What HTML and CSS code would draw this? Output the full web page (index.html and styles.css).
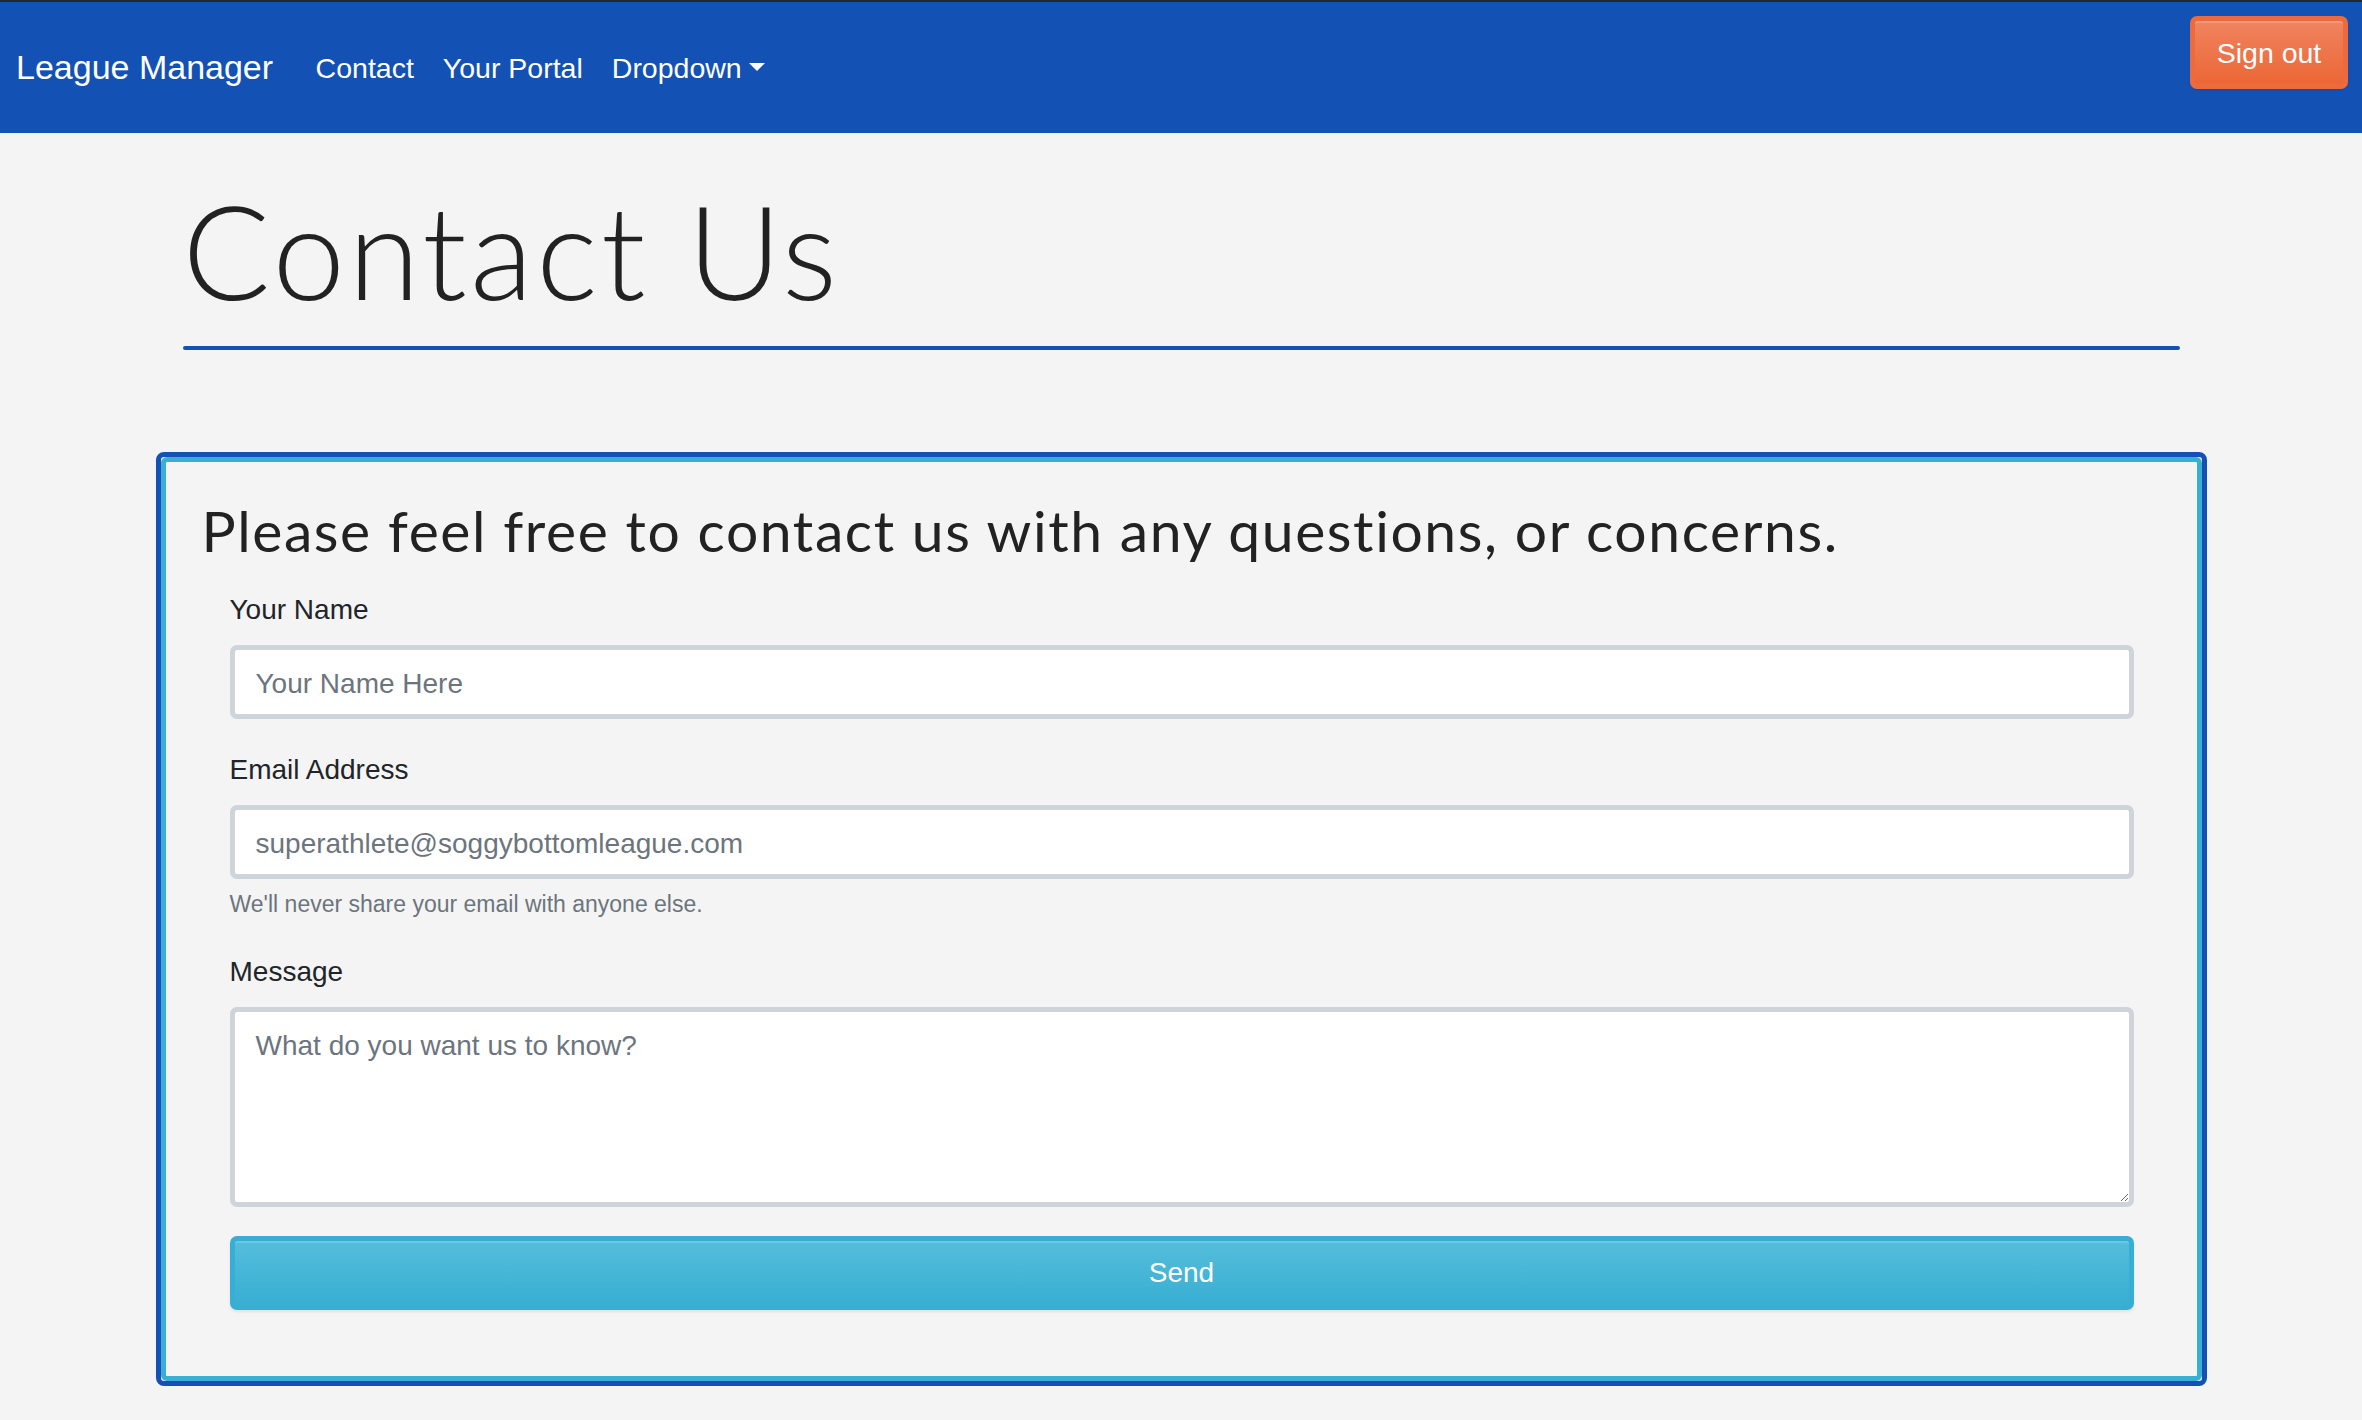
FILE: index.html
```html
<!DOCTYPE html>
<html lang="en">
<head>
<meta charset="utf-8">
<title>Contact Us - League Manager</title>
<link rel="stylesheet" href="styles.css">
</head>
<body>
<nav class="navbar">
  <a class="brand" href="#">League Manager</a>
  <ul class="nav">
    <li><a class="nav-link" href="#">Contact</a></li>
    <li><a class="nav-link" href="#">Your Portal</a></li>
    <li><a class="nav-link dropdown-toggle" href="#">Dropdown</a></li>
  </ul>
  <button class="btn btn-signout" type="button">Sign out</button>
</nav>

<main class="container">
  <h1 class="page-title">Contact Us</h1>
  <hr class="title-rule">
</main>

<section class="card">
  <div class="card-inner">
    <h2 class="card-title">Please feel free to contact us with any questions, or concerns.</h2>
    <form class="contact-form">
      <div class="form-group">
        <label class="form-label" for="name">Your Name</label>
        <input class="form-control" id="name" type="text" placeholder="Your Name Here">
      </div>
      <div class="form-group">
        <label class="form-label" for="email">Email Address</label>
        <input class="form-control form-control-help" id="email" type="email" placeholder="superathlete@soggybottomleague.com">
        <small class="form-text">We'll never share your email with anyone else.</small>
      </div>
      <div class="form-group form-group-last">
        <label class="form-label" for="message">Message</label>
        <textarea class="form-control form-textarea" id="message" placeholder="What do you want us to know?"></textarea>
      </div>
      <button class="btn btn-send" type="submit">Send</button>
    </form>
  </div>
</section>
</body>
</html>
```

FILE: styles.css
```css
* {
  box-sizing: border-box;
}

html, body {
  margin: 0;
  padding: 0;
}

body {
  background: #f4f4f4;
  color: #212529;
  font-family: "Liberation Sans", Arial, sans-serif;
  font-size: 28px;
  line-height: 1.5;
  min-height: 1420px;
}

/* ---------- Navbar ---------- */
.navbar {
  display: flex;
  align-items: center;
  height: 133px;
  border-top: 2px solid #24282c;
  background: #1351b4;
  padding: 0 14px 0 16px;
}

.brand {
  color: #fff;
  text-decoration: none;
  font-size: 34px;
  line-height: 51px;
  margin-right: 28px;
  white-space: nowrap;
}

.nav {
  display: flex;
  list-style: none;
  margin: 0;
  padding: 0;
}

.nav-link {
  display: block;
  color: #fff;
  text-decoration: none;
  font-size: 28.5px;
  line-height: 42px;
  padding: 0 14.5px;
  white-space: nowrap;
}

.dropdown-toggle::after {
  content: "";
  display: inline-block;
  margin-left: 7px;
  vertical-align: 7px;
  border-top: 8px solid #fff;
  border-left: 8px solid transparent;
  border-right: 8px solid transparent;
}

.btn {
  font-family: "Liberation Sans", Arial, sans-serif;
  color: #fff;
  cursor: pointer;
  border-radius: 7px;
}

.btn-signout {
  align-self: flex-start;
  margin: 14px 0 0 auto;
  width: 158px;
  height: 73px;
  font-size: 28.5px;
  line-height: 42px;
  padding: 0;
  border: 5px solid #ec6a3c;
  background: linear-gradient(#f0845f, #ec6636);
  box-shadow: inset 0 2px 0 rgba(255, 255, 255, 0.18), 0 1px 2px rgba(0, 0, 0, 0.08);
}

/* ---------- Page title ---------- */
.container {
  width: 1997px;
  margin: 0 auto;
}

.page-title {
  margin: 39px 0 0;
  font-family: "Lato", "Open Sans", sans-serif;
  font-weight: 300;
  font-size: 130px;
  line-height: 156px;
  letter-spacing: 3.3px;
  color: #222;
  padding-left: 0;
}

.title-rule {
  margin: 18px 0 0;
  height: 4px;
  border: none;
  border-radius: 2px;
  background: #1351b4;
}

/* ---------- Card ---------- */
.card {
  width: 2051px;
  margin: 102px auto 0;
  border: 5px solid #1351b4;
  border-radius: 8px;
}

.card-inner {
  border: 5px solid #38afd3;
  border-radius: 6px;
  background: #f4f4f4;
  padding: 34px 0 66px;
}

.card-title {
  margin: 0 0 25px;
  padding: 0 20px 0 36px;
  font-family: "Lato", "Open Sans", sans-serif;
  font-weight: 400;
  font-size: 57px;
  line-height: 68px;
  letter-spacing: 1.6px;
  color: #222;
  white-space: nowrap;
}

.contact-form {
  padding: 0 63px 0 64px;
}

.form-group {
  margin-bottom: 30px;
}

.form-group-last {
  margin-bottom: 29px;
}

.form-label {
  display: block;
  font-size: 28px;
  line-height: 42px;
  margin-bottom: 14px;
  color: #212529;
}

.form-control {
  display: block;
  width: 100%;
  height: 74px;
  padding: 13px 21px 9px;
  font-family: "Liberation Sans", Arial, sans-serif;
  font-size: 28px;
  line-height: 42px;
  color: #495057;
  background: #fff;
  border: 5px solid #ced4da;
  border-radius: 7px;
  outline: none;
}

.form-control::placeholder {
  color: #6c757d;
  opacity: 1;
}

.form-control-help {
  margin-bottom: 8px;
}

.form-text {
  display: block;
  font-size: 23px;
  line-height: 34px;
  color: #6c757d;
}

.form-textarea {
  height: 200px;
  resize: vertical;
}

.btn-send {
  display: block;
  width: 100%;
  height: 74px;
  padding: 0;
  font-size: 28px;
  line-height: 42px;
  border: 5px solid #37aed3;
  background: linear-gradient(#55bddb, #38afd3);
  box-shadow: inset 0 2px 0 rgba(255, 255, 255, 0.15), 0 2px 3px rgba(0, 0, 0, 0.08);
}
```
